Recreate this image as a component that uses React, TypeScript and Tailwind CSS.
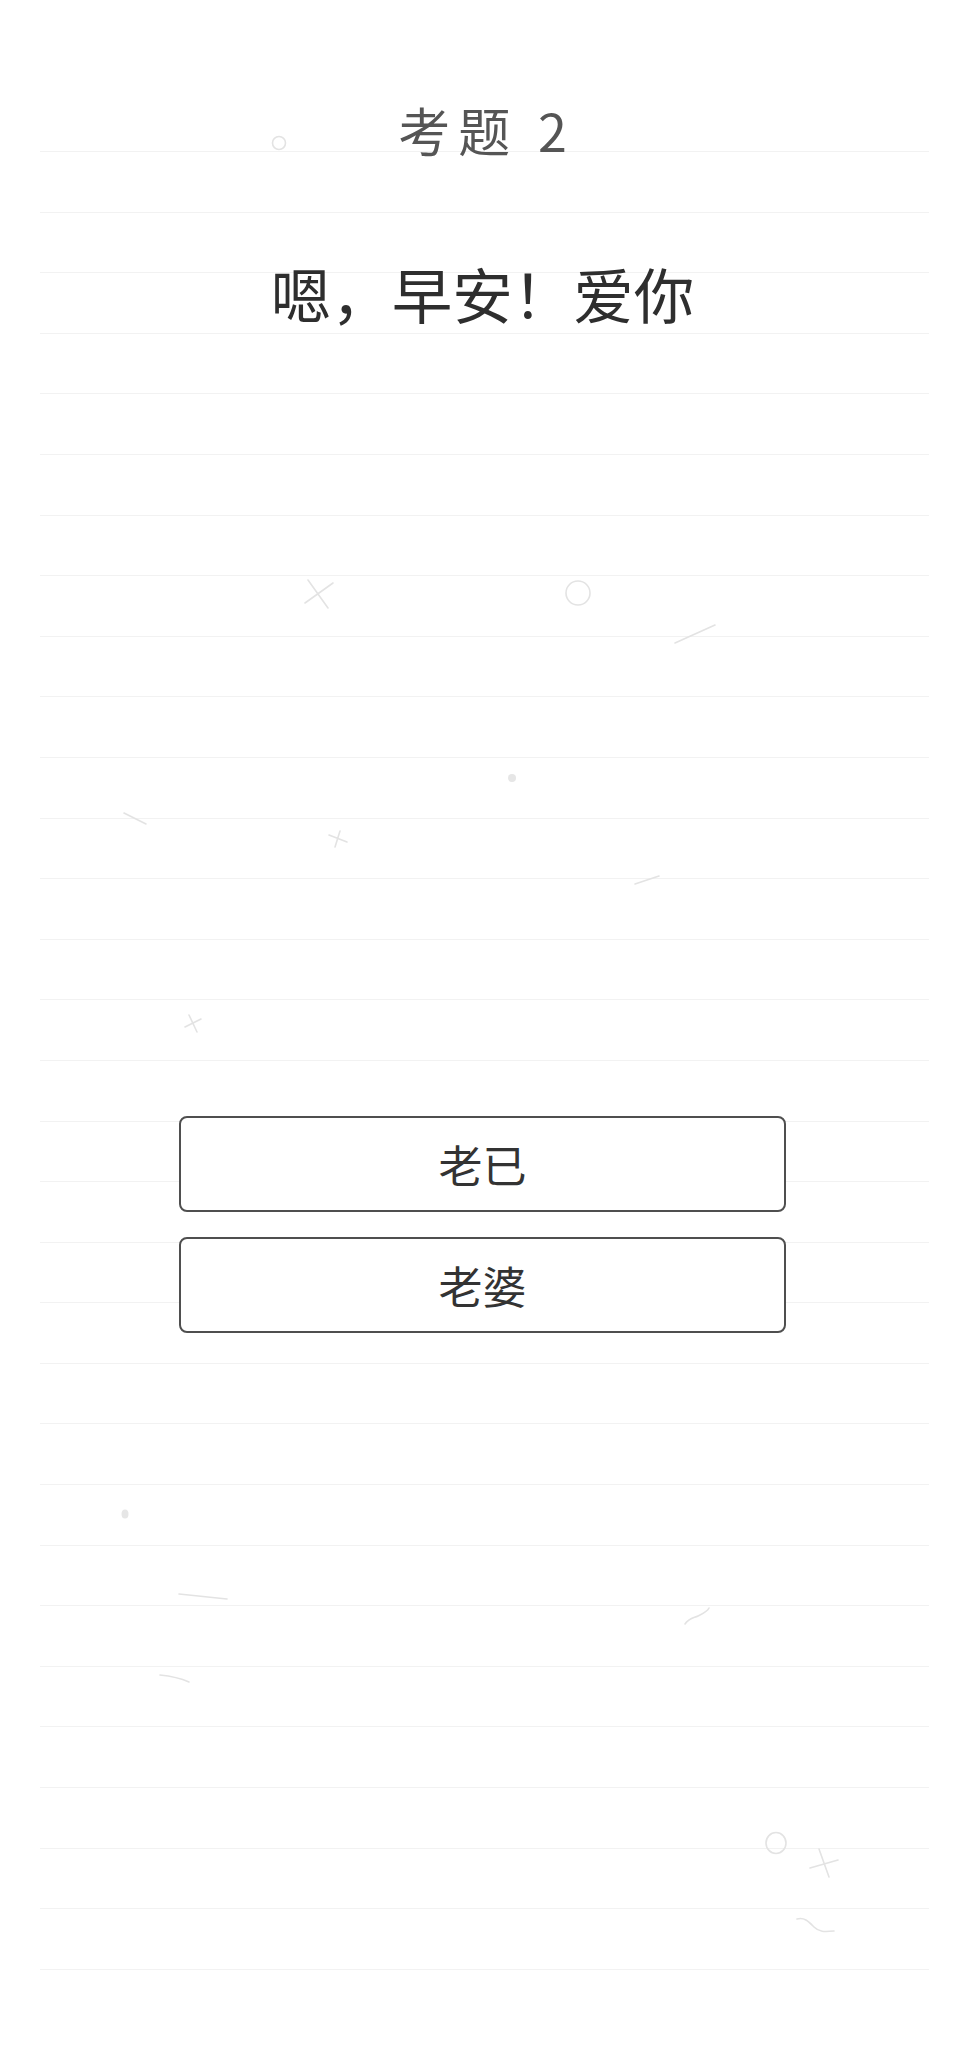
import React from 'react';

const LINE_COUNT = 31;
const OPTIONS = ['老已', '老婆'];

const Doodles: React.FC = () => (
  <svg
    className="pointer-events-none absolute left-0 top-0"
    width={965}
    height={2048}
    viewBox="0 0 965 2048"
    fill="none"
    stroke="#e3e3e3"
    strokeWidth={1.6}
    strokeLinecap="round"
  >
    <circle cx={279} cy={143} r={6.5} />
    <path d="M308 580L328 608M305 603L333 583" />
    <circle cx={578} cy={593} r={12} />
    <path d="M675 643L715 625" />
    <circle cx={512} cy={778} r={4} fill="#e6e6e6" stroke="none" />
    <path d="M124 813L146 824" />
    <path d="M329 835L347 842M340 831L335 847" />
    <path d="M635 884L659 876" />
    <path d="M185 1027L201 1019M189 1015L197 1032" />
    <ellipse cx={125} cy={1514} rx={3.5} ry={4.5} fill="#e6e6e6" stroke="none" />
    <path d="M179 1594L227 1599" />
    <path d="M685 1624c4 -6 9 -6 13 -8s9 -4 11 -8" />
    <path d="M160 1675c10 1 20 3 29 7" />
    <ellipse cx={776} cy={1843} rx={10} ry={10.5} />
    <path d="M819 1849L829 1877M810 1868L838 1860" />
    <path d="M797 1919c8 -2 12 3 17 8s10 5 20 4" />
  </svg>
);

const App: React.FC = () => {
  return (
    <div
      className="relative min-h-[2048px] w-full overflow-hidden bg-white"
      style={{ fontFamily: '"Noto Sans CJK SC", "Noto Sans", sans-serif' }}
    >
      {/* ruled paper background */}
      <div className="pointer-events-none absolute inset-x-0 top-0 flex flex-col gap-[59.6px] pl-[40px] pr-[36px] pt-[151px]">
        {Array.from({ length: LINE_COUNT }).map((_, i) => (
          <div key={i} className="h-px w-full bg-[#f2f2f2]" />
        ))}
      </div>

      <Doodles />

      <main className="relative flex flex-col items-center pt-[100px]">
        <h1 className="pl-[8px] text-[52px] leading-[60px] tracking-[8px] text-[#555555] font-normal">
          考题 2
        </h1>
        <p className="mt-[93px] text-[60.5px] leading-[80px] text-[#2e2e2e]">
          嗯，早安！爱你
        </p>

        <div className="mt-[783px] flex w-[607px] flex-col gap-[25px]">
          {OPTIONS.map(option => (
            <button
              key={option}
              className="flex h-[96px] w-full items-center justify-center rounded-lg border-2 border-[#4f4f4f] bg-white text-[44px] text-[#333333]"
            >
              {option}
            </button>
          ))}
        </div>
      </main>
    </div>
  );
};

export default App;
